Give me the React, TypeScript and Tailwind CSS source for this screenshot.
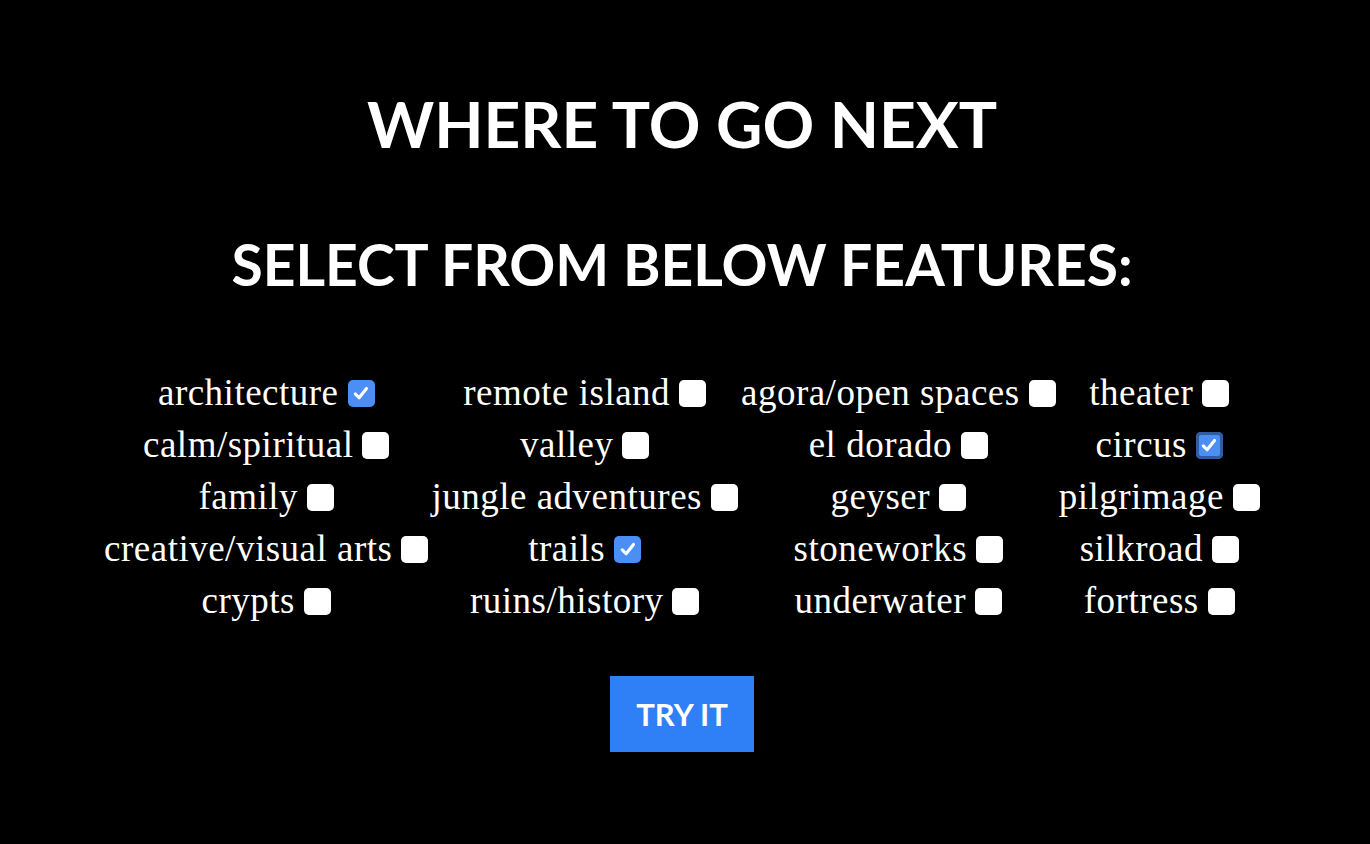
import { useState } from "react";

const FEATURES = [
  "architecture", "remote island", "agora/open spaces", "theater",
  "calm/spiritual", "valley", "el dorado", "circus",
  "family", "jungle adventures", "geyser", "pilgrimage",
  "creative/visual arts", "trails", "stoneworks", "silkroad",
  "crypts", "ruins/history", "underwater", "fortress",
];

const INITIAL = ["architecture", "circus", "trails"];

function Box({ checked, focused }: { checked: boolean; focused?: boolean }) {
  if (checked) {
    return (
      <span
        className={
          "inline-flex w-[27px] h-[27px] shrink-0 items-center justify-center rounded-[5px] bg-[#4b8ef6] " +
          (focused ? "ring-[3px] ring-[#2f5d9e] ring-inset" : "")
        }
      >
        <svg viewBox="0 0 16 16" className="w-[20px] h-[20px]" fill="none">
          <path d="M3.4 8.7 L6.5 11.8 L12.4 4.4" stroke="#fff" strokeWidth="2.5" strokeLinecap="round" strokeLinejoin="round" />
        </svg>
      </span>
    );
  }
  return <span className="inline-block w-[27px] h-[27px] shrink-0 rounded-[5px] bg-white" />;
}

export default function App() {
  const [selected, setSelected] = useState<string[]>(INITIAL);

  const toggle = (f: string) =>
    setSelected(s => (s.includes(f) ? s.filter(x => x !== f) : [...s, f]));

  return (
    <div className="min-h-[844px] bg-black text-white flex flex-col items-center pr-[6px]">
      <h1
        className="mt-[86px] text-[64px] leading-[76px] font-bold"
        style={{ fontFamily: "Lato, 'Noto Sans', sans-serif" }}
      >
        WHERE TO GO NEXT
      </h1>
      <h2
        className="mt-[68px] text-[57px] leading-[68px] font-bold"
        style={{ fontFamily: "Lato, 'Noto Sans', sans-serif" }}
      >
        SELECT FROM BELOW FEATURES:
      </h2>

      <div
        className="mt-[69px] grid grid-cols-[auto_auto_auto_auto] gap-x-[3px]"
        style={{ fontFamily: "'Liberation Serif', 'DejaVu Serif', serif" }}
      >
        {FEATURES.map(f => (
          <label
            key={f}
            onClick={() => toggle(f)}
            className="h-[52px] flex items-center justify-center gap-[9px] text-[37px] tracking-[0.5px] cursor-pointer whitespace-nowrap"
          >
            <span>{f}</span>
            <Box checked={selected.includes(f)} focused={f === "circus"} />
          </label>
        ))}
      </div>

      <button
        className="mt-[49px] w-[144px] h-[76px] bg-[#2f7ff6] text-white text-[31px] font-bold"
        style={{ fontFamily: "Lato, 'Noto Sans', sans-serif" }}
      >
        TRY IT
      </button>
    </div>
  );
}
